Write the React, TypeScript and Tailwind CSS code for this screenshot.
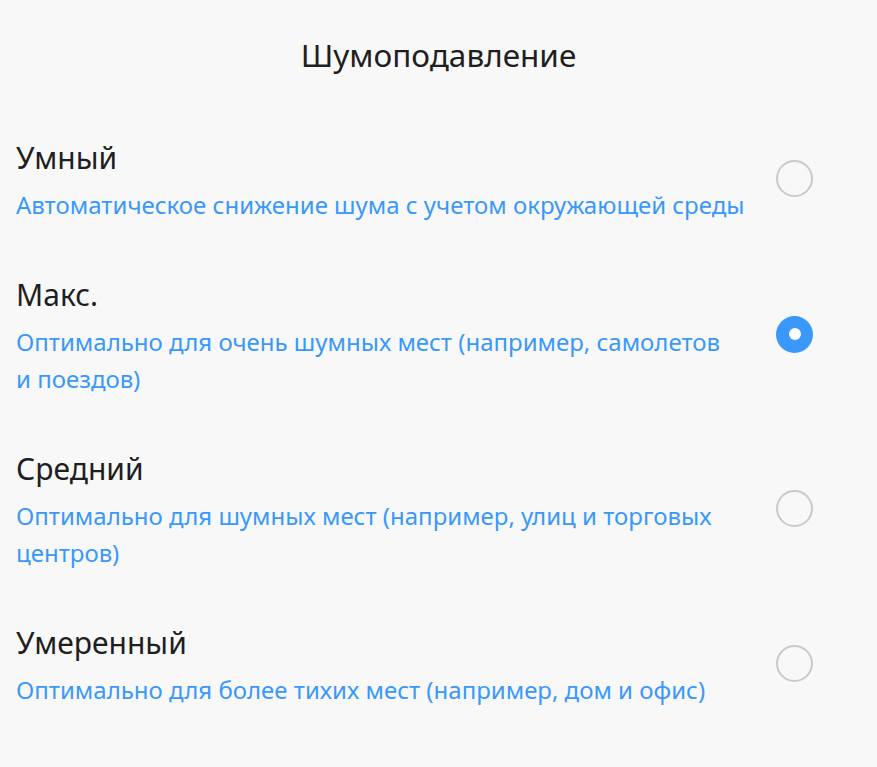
import { useState } from 'react'

interface ModeOption {
  id: string
  title: string
  lines: string[]
}

const OPTIONS: ModeOption[] = [
  {
    id: 'smart',
    title: 'Умный',
    lines: ['Автоматическое снижение шума с учетом окружающей среды'],
  },
  {
    id: 'max',
    title: 'Макс.',
    lines: ['Оптимально для очень шумных мест (например, самолетов', 'и поездов)'],
  },
  {
    id: 'medium',
    title: 'Средний',
    lines: ['Оптимально для шумных мест (например, улиц и торговых', 'центров)'],
  },
  {
    id: 'moderate',
    title: 'Умеренный',
    lines: ['Оптимально для более тихих мест (например, дом и офис)'],
  },
]

const Radio = ({ checked }: { checked: boolean }): JSX.Element =>
  checked ? (
    <span className="flex h-[37px] w-[37px] shrink-0 items-center justify-center rounded-full bg-[#3a98fb]">
      <span className="h-[12px] w-[12px] rounded-full bg-white" />
    </span>
  ) : (
    <span className="block h-[37px] w-[37px] shrink-0 rounded-full border-2 border-[#cacaca]" />
  )

const App = (): JSX.Element => {
  const [selected, setSelected] = useState<string>('max')

  return (
    <div className="min-h-[767px] bg-[#f8f8f9] font-['Noto_Sans',sans-serif] text-[#1f1f1f]">
      <header className="flex h-[110px] items-center justify-center">
        <h1 className="text-[31.5px] leading-none">Шумоподавление</h1>
      </header>
      <ul>
        {OPTIONS.map((option) => (
          <li
            key={option.id}
            className="flex cursor-pointer items-center py-6 pl-4 pr-16"
            onClick={(): void => setSelected(option.id)}
          >
            <div className="flex-1">
              <p className="text-[30px] leading-[48px]">{option.title}</p>
              <p className="mt-1 text-[24px] leading-[37px] text-[#3a98fb]">
                {option.lines.map((line) => (
                  <span key={line} className="block">
                    {line}
                  </span>
                ))}
              </p>
            </div>
            <Radio checked={selected === option.id} />
          </li>
        ))}
      </ul>
    </div>
  )
}

export default App
